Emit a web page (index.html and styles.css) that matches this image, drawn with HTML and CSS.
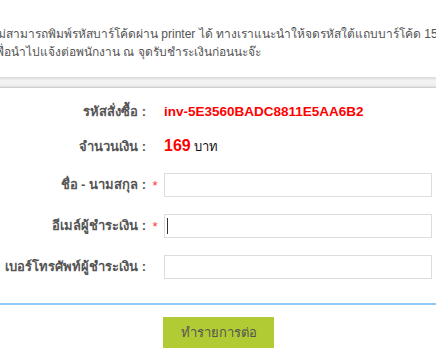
FILE: index.html
```html
<!DOCTYPE html>
<html lang="th">
<head>
    <meta charset="UTF-8">
    <meta name="viewport" content="width=device-width, initial-scale=1.0">
    <title>ชำระเงิน</title>
    <link rel="stylesheet" href="styles.css">
</head>
<body>

<div class="notice">
    <p>ไม่สามารถพิมพ์รหัสบาร์โค้ดผ่าน printer ได้ ทางเราแนะนำให้จดรหัสใต้แถบบาร์โค้ด 15 หลัก<br>เพื่อนำไปแจ้งต่อพนักงาน ณ จุดรับชำระเงินก่อนนะจ๊ะ</p>
</div>

<div class="divider"></div>

<form class="pay-form" id="pay-form">
    <div class="row row-text">
        <label>รหัสสั่งซื้อ :</label>
        <span class="req"></span>
        <span class="order-id">inv-5E3560BADC8811E5AA6B2</span>
    </div>
    <div class="row row-text">
        <label>จำนวนเงิน :</label>
        <span class="req"></span>
        <span class="amount"><b>169</b> บาท</span>
    </div>
    <div class="row row-input">
        <label for="name">ชื่อ - นามสกุล :</label>
        <span class="req">*</span>
        <span class="field"><input type="text" id="name"></span>
    </div>
    <div class="row row-input">
        <label for="email">อีเมล์ผู้ชำระเงิน :</label>
        <span class="req">*</span>
        <span class="field focused"><input type="text" id="email"></span>
    </div>
    <div class="row row-input">
        <label for="phone">เบอร์โทรศัพท์ผู้ชำระเงิน :</label>
        <span class="req"></span>
        <span class="field"><input type="text" id="phone"></span>
    </div>
</form>

<div class="actions">
    <button type="submit" form="pay-form">ทำรายการต่อ</button>
</div>

</body>
</html>
```

FILE: styles.css
```css
body {
    font-family: "Liberation Sans", Arial, sans-serif;
    font-size: 13px;
    color: #444;
    background-color: #fff;
    margin: 0;
    overflow: hidden;
}
.notice {
    height: 77px;
    overflow: hidden;
}
.notice p {
    margin: 0;
    padding-top: 25px;
    margin-left: -8px;
    font-size: 12px;
    line-height: 18px;
    white-space: nowrap;
    color: #555;
}
.divider {
    height: 10px;
    background: linear-gradient(#d9d9d9, #f4f4f4 40%, #f0f0f0 80%, #e0e0e0);
    border-bottom: 1px solid #cfcfcf;
}
.pay-form {
    padding-top: 6px;
    padding-bottom: 16px;
    border-bottom: 2px solid #8fc8f4;
}
.row {
    display: grid;
    grid-template-columns: 146px 18px 268px;
    align-items: center;
}
.row-text {
    height: 35px;
}
.row-input {
    height: 41px;
}
.row label {
    text-align: right;
    font-weight: bold;
    color: #555;
    white-space: nowrap;
}
.req {
    color: #f33;
    text-align: center;
    padding-top: 2px;
}
.order-id {
    color: #f00;
    font-weight: bold;
    font-size: 13.5px;
}
.amount {
    color: #111;
}
.amount b {
    color: #f00;
    font-size: 16px;
}
.field {
    position: relative;
    display: block;
    height: 24px;
}
.field input {
    width: 100%;
    height: 24px;
    box-sizing: border-box;
    border: 1px solid #ddd;
    outline: none;
    padding: 0 4px;
    margin: 0;
}
.field.focused::after {
    content: "";
    position: absolute;
    left: 3px;
    top: 4px;
    width: 1px;
    height: 16px;
    background-color: #333;
}
.actions {
    padding: 12px 0 0 163px;
}
.actions button {
    width: 111px;
    height: 31px;
    background-color: #b1cb34;
    color: #555;
    border: none;
    font-family: inherit;
    font-size: 13px;
    cursor: pointer;
}
```
